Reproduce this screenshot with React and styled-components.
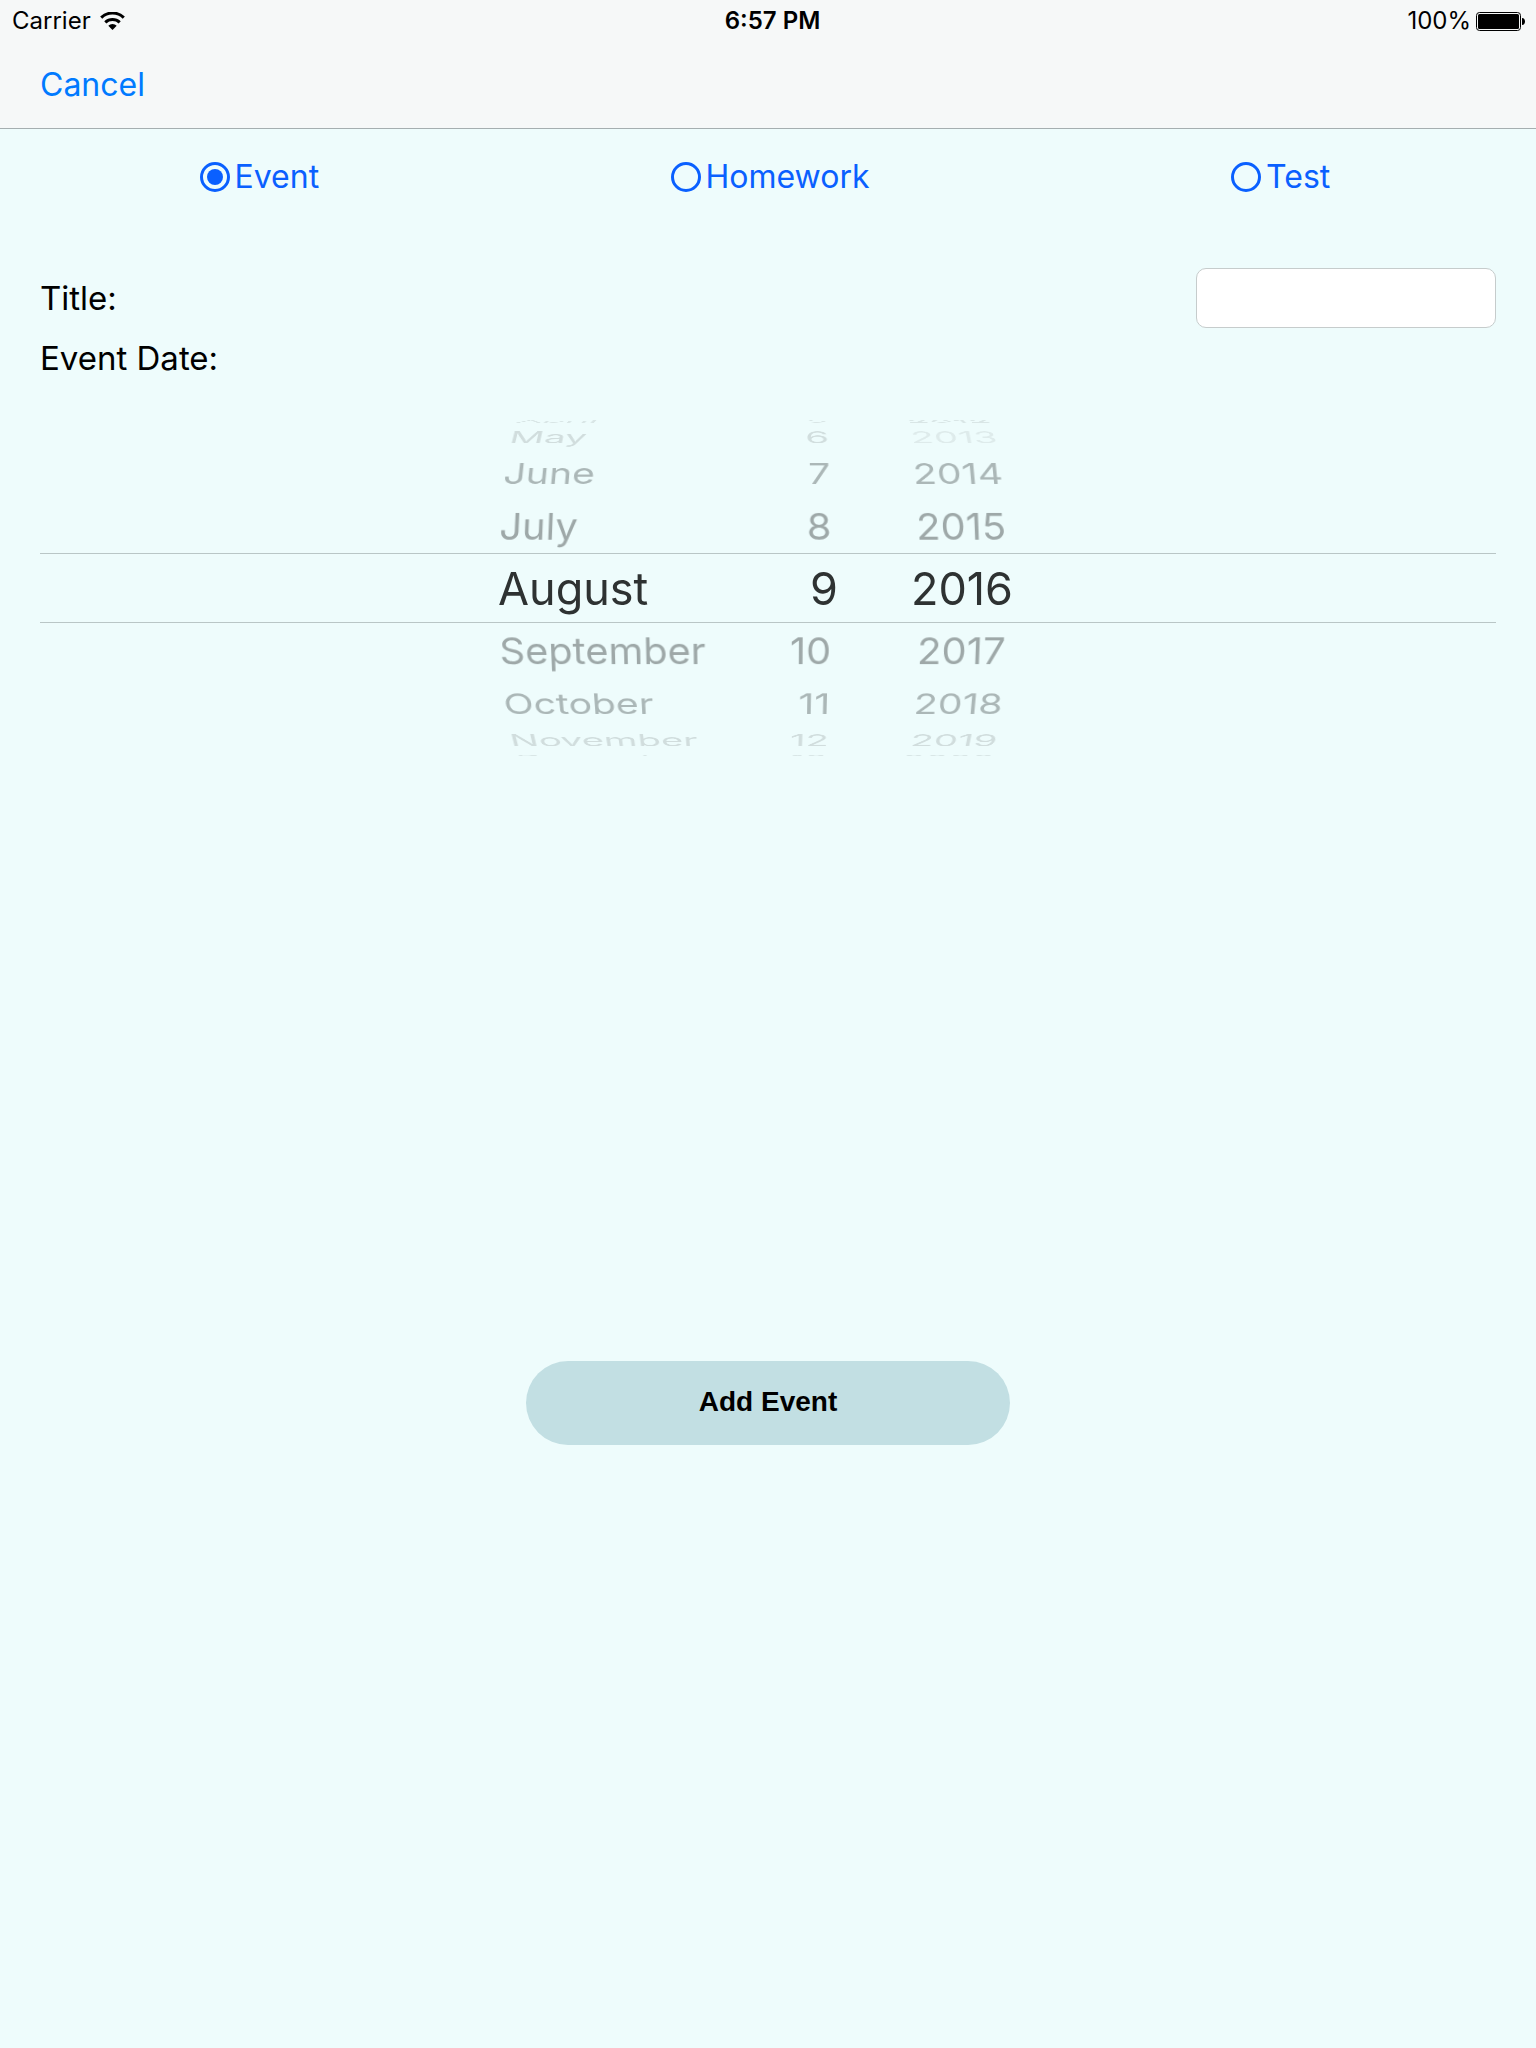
import React, { useState } from "react";
import styled, { createGlobalStyle, css } from "styled-components";

const GlobalStyle = createGlobalStyle`
  *, *::before, *::after { box-sizing: border-box; }
  html, body { margin: 0; background: #eefcfc; }
  body { font-family: Inter, "Liberation Sans", sans-serif; font-size: 32px; color: #000; }
`;

const Screen = styled.div`
  display: flex;
  flex-direction: column;
  min-height: 100vh;
  background: #eefcfc;
`;

const Header = styled.header`
  background: #f6f8f8;
  border-bottom: 1px solid #a5aeb0;
`;

const StatusBar = styled.div`
  display: grid;
  grid-template-columns: 1fr auto 1fr;
  align-items: center;
  height: 40px;
  padding: 2px 11px 0 12px;
  font-size: 24px;
  line-height: 28px;
`;

const StatusGroup = styled.div`
  display: flex;
  align-items: center;
  gap: ${(p) => p.$gap}px;
  justify-content: ${(p) => (p.$end ? "flex-end" : "flex-start")};
`;

const Clock = styled.time`
  padding-left: 8px;
  font-weight: 600;
`;

const NavBar = styled.nav`
  display: flex;
  align-items: center;
  height: 88px;
  padding: 2px 40px 0;
`;

const CancelButton = styled.button`
  padding: 0;
  border: 0;
  background: none;
  color: #007aff;
  font: inherit;
  line-height: 40px;
  cursor: pointer;
`;

const Form = styled.form`
  display: flex;
  flex-direction: column;
`;

const KindGroup = styled.div`
  display: grid;
  grid-template-columns: repeat(3, 1fr);
  height: 96px;
  padding-left: 4px;
`;

const KindOption = styled.label`
  display: flex;
  align-items: center;
  justify-content: center;
  gap: 5px;
  color: #0a60ff;
  line-height: 40px;
  cursor: pointer;
`;

const Radio = styled.input`
  appearance: none;
  display: grid;
  place-items: center;
  width: 30px;
  height: 30px;
  margin: 0;
  border: 3px solid #0a60ff;
  border-radius: 50%;

  &:checked::after {
    content: "";
    width: 16px;
    height: 16px;
    border-radius: 50%;
    background: #0a60ff;
  }
`;

const Fields = styled.div`
  padding: 43px 40px 0;
`;

const FieldRow = styled.div`
  display: flex;
  align-items: center;
  justify-content: space-between;
  height: 60px;
  font-size: 33px;
  line-height: 40px;
`;

const TitleInput = styled.input`
  width: 300px;
  height: 60px;
  padding: 0 14px;
  border: 1px solid #c6cccc;
  border-radius: 10px;
  background: #fff;
  font: inherit;
`;

const Picker = styled.div`
  display: grid;
  align-items: center;
  height: 336px;
  margin: 32px 40px 0;
  overflow: hidden;
  perspective: 2000px;
`;

const SelectionBand = styled.div`
  grid-area: 1 / 1;
  height: 70px;
  border: solid #b9c6c6;
  border-width: 1px 0;
`;

const Wheels = styled.div`
  grid-area: 1 / 1;
  display: grid;
  grid-template-columns: 240px 148px 248px;
  justify-content: center;
  padding-top: 2px;
  transform-style: preserve-3d;
`;

const Wheel = styled.ul`
  display: grid;
  align-items: center;
  justify-items: ${(p) => p.$align};
  margin: 0;
  padding: 0 0 0 ${(p) => p.$padLeft}px;
  list-style: none;
  transform-style: preserve-3d;
`;

/* Rows sit on the surface of a drum, 20 degrees apart. */
const Row = styled.li`
  grid-area: 1 / 1;
  font-size: 40px;
  line-height: 64px;
  white-space: nowrap;
  ${(p) =>
    p.$step === 0
      ? css`
          font-size: 45px;
          color: #2e3232;
        `
      : css`
          color: rgba(64, 70, 70, ${p.$ink});
          margin-right: ${p.$inset}px;
          transform: translateZ(-183px) rotateX(${-20 * p.$step}deg) translateZ(183px);
        `}
`;

const Footer = styled.div`
  display: flex;
  justify-content: center;
  padding: 605px 40px 80px;
`;

const AddButton = styled.button`
  width: 484px;
  height: 84px;
  padding: 0 0 2px;
  border: 0;
  border-radius: 42px;
  background: #c2dfe3;
  color: #000;
  font: bold 28px/34px "Liberation Sans", Arial, sans-serif;
  cursor: pointer;
`;

const INK = [1, 0.46, 0.38, 0.17, 0.12];

const WHEELS = [
  {
    name: "Month",
    align: "start",
    padLeft: 48,
    items: ["April", "May", "June", "July", "August", "September", "October", "November", "December"],
  },
  {
    name: "Day",
    align: "end",
    inset: 6,
    items: ["5", "6", "7", "8", "9", "10", "11", "12", "13"],
  },
  {
    name: "Year",
    align: "center",
    items: ["2012", "2013", "2014", "2015", "2016", "2017", "2018", "2019", "2020"],
  },
];

const KINDS = ["Event", "Homework", "Test"];

function WifiIcon() {
  return (
    <svg width="25" height="18" viewBox="0 0 25 18" aria-hidden="true">
      <g fill="none" stroke="#000" strokeWidth="3">
        <path d="M1.2 5.6a16.2 16.2 0 0 1 22.6 0" />
        <path d="M5.3 10.3a10.4 10.4 0 0 1 14.4 0" />
      </g>
      <path d="M12.5 18l-4.2-4.3a6 6 0 0 1 8.4 0z" />
    </svg>
  );
}

function BatteryIcon() {
  return (
    <svg width="49" height="19" viewBox="0 0 49 19" aria-hidden="true">
      <rect x="0.5" y="0.5" width="44" height="18" rx="3" fill="none" stroke="#000" />
      <rect x="2" y="2" width="41" height="15" rx="1.5" />
      <path d="M46 6c2 0 3 1.6 3 3.5S48 13 46 13z" />
    </svg>
  );
}

export default function App() {
  const [kind, setKind] = useState("Event");
  const [title, setTitle] = useState("");

  return (
    <Screen>
      <GlobalStyle />
      <Header>
        <StatusBar>
          <StatusGroup $gap={9}>
            <span>Carrier</span>
            <WifiIcon />
          </StatusGroup>
          <Clock>6:57 PM</Clock>
          <StatusGroup $gap={5} $end>
            <span>100%</span>
            <BatteryIcon />
          </StatusGroup>
        </StatusBar>
        <NavBar>
          <CancelButton type="button">Cancel</CancelButton>
        </NavBar>
      </Header>
      <Form onSubmit={(e) => e.preventDefault()}>
        <KindGroup role="radiogroup" aria-label="Kind">
          {KINDS.map((k) => (
            <KindOption key={k}>
              <Radio type="radio" name="kind" checked={kind === k} onChange={() => setKind(k)} />
              {k}
            </KindOption>
          ))}
        </KindGroup>
        <Fields>
          <FieldRow>
            <label htmlFor="title">Title:</label>
            <TitleInput id="title" type="text" value={title} onChange={(e) => setTitle(e.target.value)} />
          </FieldRow>
          <FieldRow>
            <span id="date-label">Event Date:</span>
          </FieldRow>
        </Fields>
        <Picker role="group" aria-labelledby="date-label">
          <SelectionBand />
          <Wheels>
            {WHEELS.map((w) => (
              <Wheel
                key={w.name}
                role="listbox"
                aria-label={w.name}
                $align={w.align}
                $padLeft={w.padLeft || 0}
              >
                {w.items.map((item, i) => (
                  <Row
                    key={item}
                    role="option"
                    aria-selected={i === 4}
                    $step={i - 4}
                    $ink={item === "2013" ? 0.09 : INK[Math.abs(i - 4)]}
                    $inset={w.inset || 0}
                  >
                    {item}
                  </Row>
                ))}
              </Wheel>
            ))}
          </Wheels>
        </Picker>
        <Footer>
          <AddButton type="submit">Add Event</AddButton>
        </Footer>
      </Form>
    </Screen>
  );
}
